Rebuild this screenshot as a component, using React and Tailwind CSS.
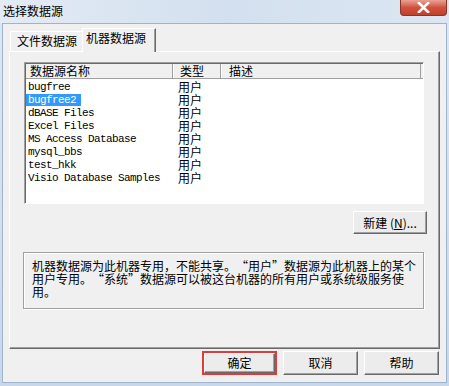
import React from 'react';

const cjk = "font-['Noto_Sans_CJK_SC','Liberation_Sans',sans-serif]";
const mono = "font-['Liberation_Mono',monospace]";

const sources = [
  'bugfree',
  'bugfree2',
  'dBASE Files',
  'Excel Files',
  'MS Access Database',
  'mysql_bbs',
  'test_hkk',
  'Visio Database Samples',
];

const btn =
  'flex items-center justify-center bg-[#ececec] border border-t-white border-l-white border-r-[#696969] border-b-[#696969] shadow-[inset_-1px_-1px_0_#a0a0a0] text-[12px] leading-[14px] text-black';

// full-width quotation marks, as the dialog's font draws them
const Open = () => <span className="inline-block w-[12px] text-right">“</span>;
const Close = () => <span className="inline-block w-[12px] text-left">”</span>;

const App = () => {
  return (
    <div className={`w-[449px] h-[386px] flex flex-col bg-gradient-to-b from-[#dde8f4] to-[#c8d8ea] ${cjk}`}>
      {/* Title bar */}
      <div className="h-[23px] flex items-start bg-gradient-to-r from-[#e3ebf5] via-[#d3e0ef] to-[#dbe6f2]">
        <span className="ml-[3px] mt-[3px] text-[12px] leading-[16px] text-black">选择数据源</span>
        <div className="ml-auto mr-[2px] w-[47px] h-[16px] rounded-b-[4px] border border-t-0 border-[#8a3327] bg-gradient-to-b from-[#e8a193] via-[#d2513d] to-[#c0402c] flex items-center justify-center">
          <svg width="13" height="11" viewBox="0 0 13 11">
            <path d="M2 1 L11 10 M11 1 L2 10" stroke="#fff" strokeWidth="2.6" strokeLinecap="square" />
          </svg>
        </div>
      </div>

      {/* Client area */}
      <div className="mx-[2px] mb-[3px] flex-1 bg-[#f0f0f0] border border-[#9fb3cb] flex flex-col">
        {/* Tabs */}
        <div className="h-[27px] flex items-end pl-[7px]">
          <div className="h-[20px] w-[72px] border-t border-l border-white text-[12px] leading-[18px] pl-[6px] text-black">
            文件数据源
          </div>
          <div className="relative z-10 -mb-[1px] h-[24px] w-[74px] bg-[#f0f0f0] border-t border-l border-white border-r border-r-[#696969] shadow-[inset_-1px_0_0_#a0a0a0] text-[12px] leading-[18px] pl-[3px] text-black">
            机器数据源
          </div>
        </div>

        {/* Tab panel */}
        <div className="ml-[6px] w-[431px] h-[298px] border border-t-white border-l-white border-r-[#696969] border-b-[#696969] shadow-[inset_-1px_-1px_0_#a0a0a0] flex flex-col">
          {/* List view */}
          <div className="ml-[14px] mt-[10px] w-[400px] h-[142px] bg-white border border-t-[#a0a0a0] border-l-[#a0a0a0] border-r-white border-b-white shadow-[inset_1px_1px_0_#696969] flex flex-col">
            <div className="ml-[1px] mt-[1px] h-[15px] flex bg-[#f0f0f0] border-b border-[#a0a0a0] text-[12px] leading-[14px] text-black">
              <div className="w-[147px] pl-[4px] border-r border-[#a0a0a0]">数据源名称</div>
              <div className="w-[48px] pl-[6px] border-l border-white border-r border-r-[#a0a0a0]">类型</div>
              <div className="w-[200px] pl-[7px] border-l border-white border-r border-r-[#a0a0a0]">描述</div>
            </div>
            <div className="pt-[1px] flex flex-col">
              {sources.map((name, i) => (
                <div key={name} className="h-[13px] flex items-center">
                  <div className="w-[148px] h-[13px] pl-[1px] flex items-center">
                    <span
                      className={`h-[12px] pl-[2px] pr-[5px] ${mono} text-[11px] leading-[12px] tracking-[-0.6px] ${
                        i === 1 ? 'bg-[#3399ff] text-white' : 'text-black'
                      }`}
                    >
                      {name}
                    </span>
                  </div>
                  <div className="h-[13px] pl-[5px] text-[12px] leading-[13px] text-black">用户</div>
                </div>
              ))}
            </div>
          </div>

          {/* New button */}
          <div className="flex justify-end mt-[7px] pr-[12px]">
            <div className={`${btn} w-[74px] h-[23px]`}>
              新建 (<span className="underline">N</span>)...
            </div>
          </div>

          {/* Description */}
          <div className="ml-[13px] mt-[18px] w-[401px] h-[57px] border border-[#a0a0a0] shadow-[inset_1px_1px_0_#ffffff,1px_1px_0_#ffffff] pl-[8px] pt-[6px] text-[12px] leading-[13px] text-black whitespace-nowrap">
            <div className="h-[13px]">
              机器数据源为此机器专用，不能共享。<Open />用户<Close />数据源为此机器上的某个
            </div>
            <div className="h-[13px]">
              用户专用。<Open />系统<Close />数据源可以被这台机器的所有用户或系统级服务使
            </div>
            <div className="h-[13px]">用。</div>
          </div>
        </div>

        {/* Bottom buttons */}
        <div className="flex justify-end mt-[2px] pr-[7px] gap-[6px]">
          <div className="w-[75px] h-[24px] border-2 border-[#e03a3a] flex">
            <div className={`${btn} flex-1`}>确定</div>
          </div>
          <div className={`${btn} w-[75px] h-[24px]`}>取消</div>
          <div className={`${btn} w-[75px] h-[24px]`}>帮助</div>
        </div>
      </div>
    </div>
  );
};

export default App;
